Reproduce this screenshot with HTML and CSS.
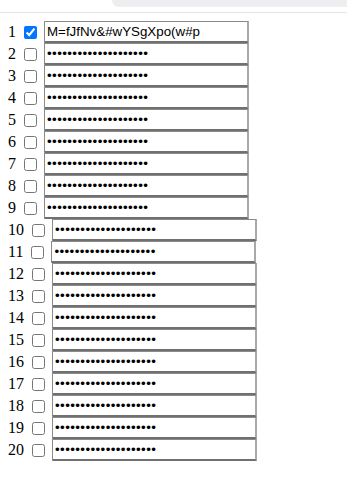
FILE: index.html
```html
<!DOCTYPE html>
<html>
<head>
<meta charset="utf-8">
<link rel="stylesheet" href="styles.css">
</head>
<body>
<div class="topbar"><div class="tab"></div></div>
<div class="list">
<div class="row"><span class="num">1</span><input type="checkbox" class="check" checked><input type="text" class="field" value="M=fJfNv&amp;#wYSgXpo(w#p"></div>
<div class="row"><span class="num">2</span><input type="checkbox" class="check"><input type="password" class="field secret" value="aaaaaaaaaaaaaaaaaaaa"></div>
<div class="row"><span class="num">3</span><input type="checkbox" class="check"><input type="password" class="field secret" value="aaaaaaaaaaaaaaaaaaaa"></div>
<div class="row"><span class="num">4</span><input type="checkbox" class="check"><input type="password" class="field secret" value="aaaaaaaaaaaaaaaaaaaa"></div>
<div class="row"><span class="num">5</span><input type="checkbox" class="check"><input type="password" class="field secret" value="aaaaaaaaaaaaaaaaaaaa"></div>
<div class="row"><span class="num">6</span><input type="checkbox" class="check"><input type="password" class="field secret" value="aaaaaaaaaaaaaaaaaaaa"></div>
<div class="row"><span class="num">7</span><input type="checkbox" class="check"><input type="password" class="field secret" value="aaaaaaaaaaaaaaaaaaaa"></div>
<div class="row"><span class="num">8</span><input type="checkbox" class="check"><input type="password" class="field secret" value="aaaaaaaaaaaaaaaaaaaa"></div>
<div class="row"><span class="num">9</span><input type="checkbox" class="check"><input type="password" class="field secret" value="aaaaaaaaaaaaaaaaaaaa"></div>
<div class="row"><span class="num">10</span><input type="checkbox" class="check"><input type="password" class="field secret" value="aaaaaaaaaaaaaaaaaaaa"></div>
<div class="row"><span class="num">11</span><input type="checkbox" class="check"><input type="password" class="field secret" value="aaaaaaaaaaaaaaaaaaaa"></div>
<div class="row"><span class="num">12</span><input type="checkbox" class="check"><input type="password" class="field secret" value="aaaaaaaaaaaaaaaaaaaa"></div>
<div class="row"><span class="num">13</span><input type="checkbox" class="check"><input type="password" class="field secret" value="aaaaaaaaaaaaaaaaaaaa"></div>
<div class="row"><span class="num">14</span><input type="checkbox" class="check"><input type="password" class="field secret" value="aaaaaaaaaaaaaaaaaaaa"></div>
<div class="row"><span class="num">15</span><input type="checkbox" class="check"><input type="password" class="field secret" value="aaaaaaaaaaaaaaaaaaaa"></div>
<div class="row"><span class="num">16</span><input type="checkbox" class="check"><input type="password" class="field secret" value="aaaaaaaaaaaaaaaaaaaa"></div>
<div class="row"><span class="num">17</span><input type="checkbox" class="check"><input type="password" class="field secret" value="aaaaaaaaaaaaaaaaaaaa"></div>
<div class="row"><span class="num">18</span><input type="checkbox" class="check"><input type="password" class="field secret" value="aaaaaaaaaaaaaaaaaaaa"></div>
<div class="row"><span class="num">19</span><input type="checkbox" class="check"><input type="password" class="field secret" value="aaaaaaaaaaaaaaaaaaaa"></div>
<div class="row"><span class="num">20</span><input type="checkbox" class="check"><input type="password" class="field secret" value="aaaaaaaaaaaaaaaaaaaa"></div>
</div>
</body>
</html>
```
FILE: styles.css
```css
html, body {
  margin: 0;
  padding: 0;
  background: #ffffff;
}
body {
  font-family: "Liberation Serif", "Times New Roman", serif;
  font-size: 16px;
  color: #000;
}
.topbar {
  height: 13px;
  border-bottom: 1px solid #e4e4e4;
  box-sizing: border-box;
}
.tab {
  margin-left: 112px;
  height: 7px;
  background: #eeeef0;
  border-bottom-left-radius: 8px;
}
.list {
  padding: 8px 8px 0 8px;
}
.row {
  height: 22px;
  display: flex;
  align-items: center;
}
.num {
  line-height: 22px;
}
.check {
  margin: 0 7px 0 8px;
  width: 13px;
  height: 13px;
}
.field {
  font-family: "Liberation Sans", Arial, sans-serif;
  font-size: 13.333px;
  width: 205px;
  height: 22px;
  box-sizing: border-box;
  padding: 1px 2px;
  border-style: solid;
  border-width: 1px 2px 2px 1px;
  border-color: #8a8a8a #a9a9a9 #707070 #8a8a8a;
  border-radius: 1px;
  margin: 0;
  color: #000;
}
.secret {
  letter-spacing: 0.4px;
}
```
